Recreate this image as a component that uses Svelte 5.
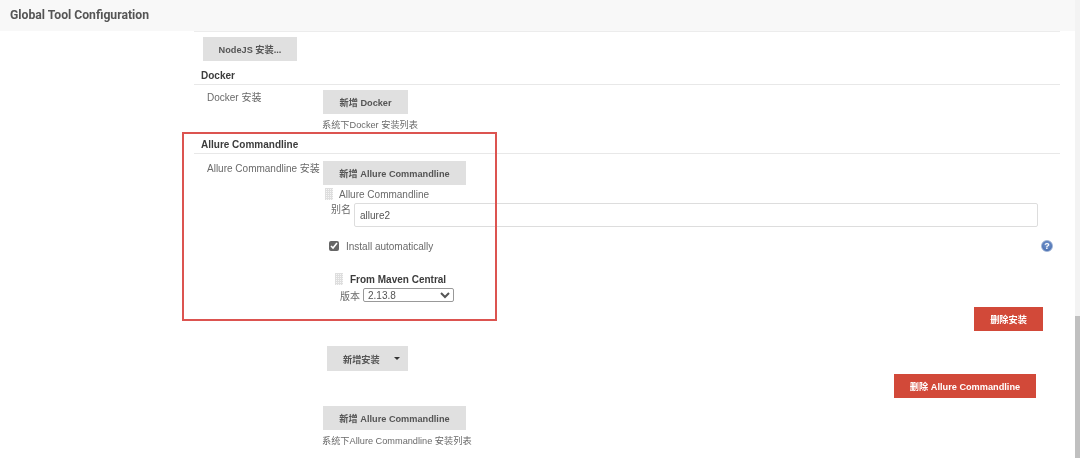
<script>
  let alias = "allure2";
  let autoInstall = true;
  let version = "2.13.8";
</script>

<div class="page">
  <header class="top">
    <h1>Global Tool Configuration</h1>
  </header>

  <main class="content">
    <button class="btn nodejs">NodeJS 安装...</button>

    <h2 class="section docker-title">Docker</h2>
    <div class="row docker-row">
      <div class="label">Docker 安装</div>
      <div class="field">
        <button class="btn add-docker">新增 Docker</button>
        <div class="hint">系统下Docker 安装列表</div>
      </div>
    </div>

    <h2 class="section allure-title">Allure Commandline</h2>
    <div class="row allure-row">
      <div class="label">Allure Commandline 安装</div>
      <div class="field">
        <button class="btn add-allure">新增 Allure Commandline</button>

        <div class="tool-head">
          <span class="handle"></span>
          <span>Allure Commandline</span>
        </div>
        <div class="alias-row">
          <label for="alias">别名</label>
          <input id="alias" type="text" bind:value={alias} />
        </div>
        <div class="auto-row">
          <input class="check" type="checkbox" bind:checked={autoInstall} />
          <span class="auto-text">Install automatically</span>
          <span class="help">?</span>
        </div>
        <div class="maven-head">
          <span class="handle"></span>
          <b>From Maven Central</b>
        </div>
        <div class="version-row">
          <span>版本</span>
          <select bind:value={version}>
            <option>2.13.8</option>
            <option>2.13.7</option>
          </select>
        </div>
        <div class="delete-install">
          <button class="btn red">删除安装</button>
        </div>
        <button class="btn add-install">新增安装<span class="caret"></span></button>
        <div class="delete-allure">
          <button class="btn red wide">删除 Allure Commandline</button>
        </div>
        <button class="btn add-allure bottom">新增 Allure Commandline</button>
        <div class="hint">系统下Allure Commandline 安装列表</div>
      </div>
    </div>
  </main>

  <div class="highlight"></div>
  <div class="scrollbar"><div class="thumb"></div></div>
</div>

<style>
  :global(body) {
    margin: 0;
    background: #fff;
  }

  .page {
    position: relative;
    width: 1080px;
    height: 458px;
    overflow: hidden;
    font-family: "Liberation Sans", "Noto Sans CJK SC", sans-serif;
    font-size: 10px;
    color: #6a6a6a;
    filter: blur(0.4px);
  }

  .top {
    height: 31px;
    background: #f8f8f8;
    display: flex;
    align-items: center;
    padding: 0 0 2px 10px;
    box-sizing: border-box;
  }

  .top h1 {
    margin: 0;
    font-family: Roboto, sans-serif;
    font-size: 12.2px;
    font-weight: 700;
    color: #555;
  }

  .content {
    margin-left: 194px;
    width: 866px;
    border-top: 1px solid #ececec;
    height: 426px;
  }

  .btn {
    display: block;
    height: 24px;
    padding: 0;
    border: none;
    border-radius: 0;
    background: #e0e0e0;
    color: #555;
    font-family: inherit;
    font-size: 9.2px;
    font-weight: 700;
    box-sizing: border-box;
  }

  .nodejs {
    width: 94px;
    margin: 5px 0 0 9px;
  }

  .section {
    margin: 0;
    padding: 0 0 0 7px;
    font-size: 10px;
    font-weight: 700;
    color: #3c3c3c;
    line-height: 14px;
    border-bottom: 1px solid #e8e8e8;
  }

  .docker-title {
    margin-top: 8px;
    padding-bottom: 1px;
  }

  .allure-title {
    margin-top: 6px;
    padding-bottom: 1px;
  }

  .row {
    display: flex;
  }

  .label {
    width: 129px;
    padding-left: 13px;
    box-sizing: border-box;
    line-height: 14px;
    font-size: 10px;
    flex: none;
  }

  .docker-row .label {
    margin-top: 1px;
  }

  .docker-row {
    height: 42px;
    padding-top: 5px;
  }

  .allure-row {
    padding-top: 7px;
  }

  .allure-row .label {
    margin-top: 1px;
  }

  .field {
    flex: 1;
    min-width: 0;
    position: relative;
  }

  .add-docker {
    width: 85px;
  }

  .add-allure {
    width: 143px;
  }

  .hint {
    margin: 5px 0 0 -1px;
    font-size: 9.2px;
    line-height: 12px;
  }

  .tool-head {
    display: flex;
    align-items: center;
    height: 12px;
    margin: 3px 0 0 2px;
    gap: 6px;
    font-size: 10px;
  }

  .handle {
    display: block;
    width: 8px;
    height: 12px;
    flex: none;
    background-color: #f6f6f6;
    background-image:
      linear-gradient(to right, #dedede 1px, transparent 1px),
      linear-gradient(to bottom, #dedede 1px, transparent 1px);
    background-size: 2px 2px;
  }

  .alias-row {
    display: flex;
    margin: 3px 0 0 8px;
    gap: 3px;
    height: 24px;
  }

  .alias-row label {
    line-height: 14px;
    width: 20px;
  }

  .alias-row input {
    width: 684px;
    height: 24px;
    box-sizing: border-box;
    border: 1px solid #ddd;
    border-radius: 2px;
    padding: 0 5px;
    font-family: inherit;
    font-size: 10px;
    color: #555;
    background: #fff;
    outline: none;
  }

  .auto-row {
    display: flex;
    align-items: center;
    height: 12px;
    margin: 13px 0 0 6px;
    position: relative;
  }

  .check {
    width: 10px;
    height: 10px;
    margin: 0;
    accent-color: #666;
  }

  .auto-text {
    margin-left: 7px;
  }

  .help {
    position: absolute;
    left: 712px;
    top: 0;
    width: 12px;
    height: 12px;
    border-radius: 50%;
    background: radial-gradient(circle at 50% 40%, #7b9bd0, #3a62a8);
    border: 1px solid #9db2d6;
    box-sizing: border-box;
    color: #fff;
    font-size: 9px;
    font-weight: 700;
    line-height: 10px;
    text-align: center;
  }

  .maven-head {
    display: flex;
    align-items: center;
    gap: 7px;
    height: 12px;
    margin: 21px 0 0 12px;
  }

  .maven-head b {
    color: #3c3c3c;
    font-size: 10px;
  }

  .version-row {
    display: flex;
    align-items: center;
    gap: 3px;
    height: 12px;
    margin: 4px 0 0 17px;
  }

  .version-row select {
    width: 91px;
    height: 14px;
    padding: 0;
    border: 1px solid #999;
    border-radius: 2px;
    background: #fff;
    font-family: inherit;
    font-size: 10px;
    color: #555;
  }

  .delete-install {
    display: flex;
    margin: 6px 0 0 651px;
  }

  .red {
    background: #d24939;
    color: #fff;
    width: 69px;
  }

  .wide {
    width: 142px;
  }

  .add-install {
    width: 81px;
    height: 25px;
    margin: 15px 0 0 4px;
    padding-left: 16px;
    display: flex;
    align-items: center;
  }

  .caret {
    margin-left: 14px;
    border-left: 3px solid transparent;
    border-right: 3px solid transparent;
    border-top: 3px solid #333;
  }

  .delete-allure {
    margin: 3px 0 0 571px;
  }

  .bottom {
    margin-top: 8px;
  }

  .highlight {
    position: absolute;
    left: 182px;
    top: 132px;
    width: 315px;
    height: 189px;
    box-sizing: border-box;
    border: 2px solid #dc5450;
    pointer-events: none;
  }

  .scrollbar {
    position: absolute;
    right: 0;
    top: 0;
    width: 5px;
    height: 458px;
    background: #f3f3f3;
  }

  .thumb {
    position: absolute;
    top: 316px;
    bottom: 0;
    width: 100%;
    background: #c0c0c0;
  }
</style>
